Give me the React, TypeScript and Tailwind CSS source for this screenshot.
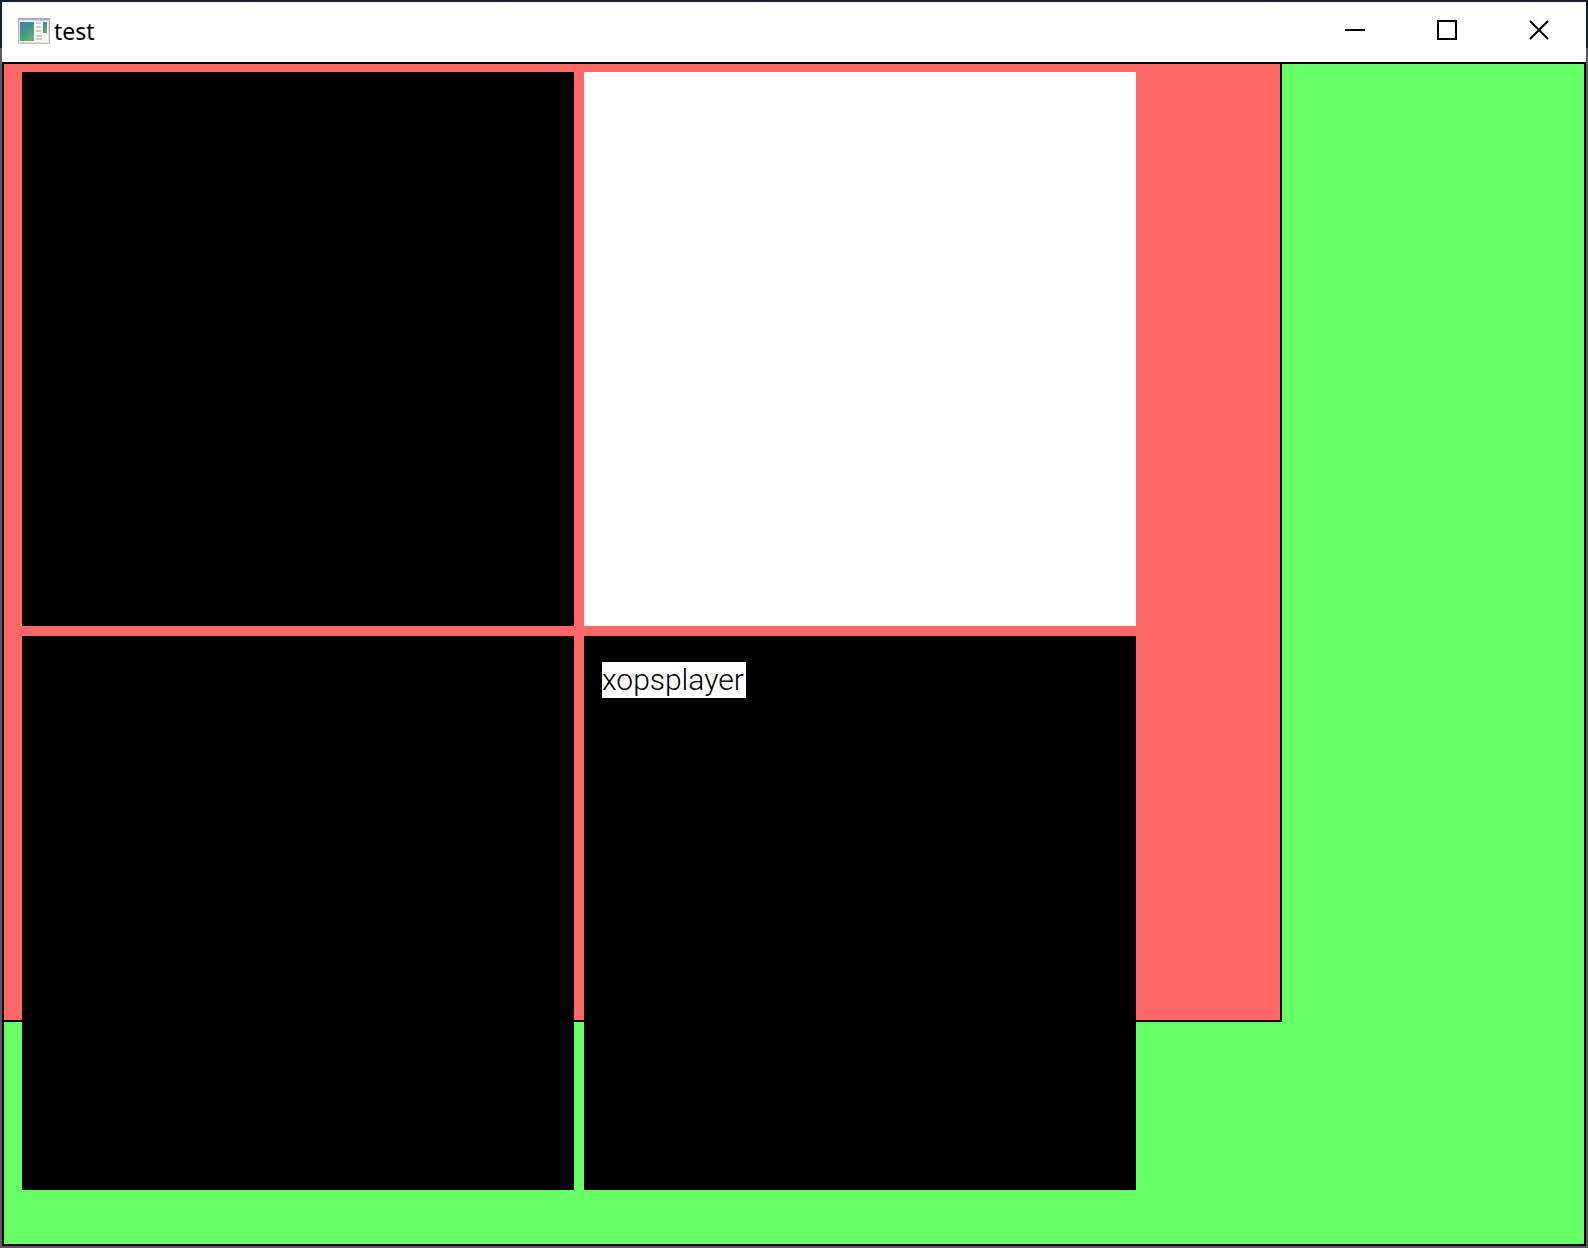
import type { ReactNode } from 'react';

function AppIcon() {
  return (
    <svg width="32" height="26" viewBox="0 0 32 26" aria-hidden="true">
      <defs>
        <linearGradient id="screen" x1="0" y1="0" x2="0.6" y2="1">
          <stop offset="0" stopColor="#4480a8" />
          <stop offset="0.5" stopColor="#46918f" />
          <stop offset="1" stopColor="#62b070" />
        </linearGradient>
        <linearGradient id="frame" x1="0" y1="0" x2="0" y2="1">
          <stop offset="0" stopColor="#a2a9b4" />
          <stop offset="1" stopColor="#c3c3c3" />
        </linearGradient>
      </defs>
      <rect width="32" height="26" fill="url(#frame)" />
      <rect x="1" y="1" width="30" height="24" fill="#dcdfe6" />
      <path d="M1 1.5h30" stroke="#b4bac6" />
      <path d="M22 2h2M25 2h2M28 2h2" stroke="#8f98ac" />
      <rect x="2" y="3" width="28" height="21" fill="#f7f7f7" />
      <rect x="2" y="4" width="14" height="19" fill="url(#screen)" />
      <path d="M18 5h5M18 9h5M18 13h5M18 18h6M18 21h6" stroke="#cccccc" strokeWidth="2" />
      <rect x="25" y="4" width="4" height="11" fill="url(#screen)" />
    </svg>
  );
}

function CaptionButton({ label, children }: { label: string; children: ReactNode }) {
  return (
    <button type="button" aria-label={label} className="flex w-[92px] items-center justify-center pb-1 hover:bg-gray-200">
      <svg width="20" height="20" viewBox="0 0 20 20" fill="none" stroke="black" strokeWidth="2">
        {children}
      </svg>
    </button>
  );
}

function TitleBar() {
  return (
    <header className="flex h-15 items-stretch bg-white pr-px">
      <div className="flex flex-1 items-center gap-1 pb-0.5 pl-4">
        <AppIcon />
        <h1 className="font-['Noto_Sans',sans-serif] text-[23px] leading-7 text-black">test</h1>
      </div>
      <CaptionButton label="Minimize">
        <path d="M0 10h20" />
      </CaptionButton>
      <CaptionButton label="Maximize">
        <path d="M1 1h18v18H1z" />
      </CaptionButton>
      <CaptionButton label="Close">
        <path d="M1 1l18 18M19 1L1 19" />
      </CaptionButton>
    </header>
  );
}

export default function App() {
  return (
    <div className="flex min-h-screen flex-col bg-[#5c5a62] bg-linear-to-b from-[#16202c] from-[48px] to-[#5c5a62] to-[48px] p-0.5">
      <TitleBar />

      <main className="flex-1 bg-[#66ff66] inset-ring-2 inset-ring-black">
        {/* the panel keeps 4:3, its tiles may run over the lower edge */}
        <section className="aspect-4/3 min-h-0 w-80/99 border-2 border-black bg-[#ff6666]">
          <div className="grid grid-cols-2 gap-[10px] pt-2 pr-[144px] pl-[18px]">
            <div className="aspect-[552/554] bg-black" />
            <div className="aspect-[552/554] bg-white" />
            <div className="aspect-[552/554] bg-black" />
            <div className="aspect-[552/554] bg-black px-[18px] pt-[26px]">
              <p className="w-fit bg-white pr-0.5 font-[Roboto,sans-serif] text-[30px] leading-9 font-light text-black">
                xopsplayer
              </p>
            </div>
          </div>
        </section>
      </main>
    </div>
  );
}
